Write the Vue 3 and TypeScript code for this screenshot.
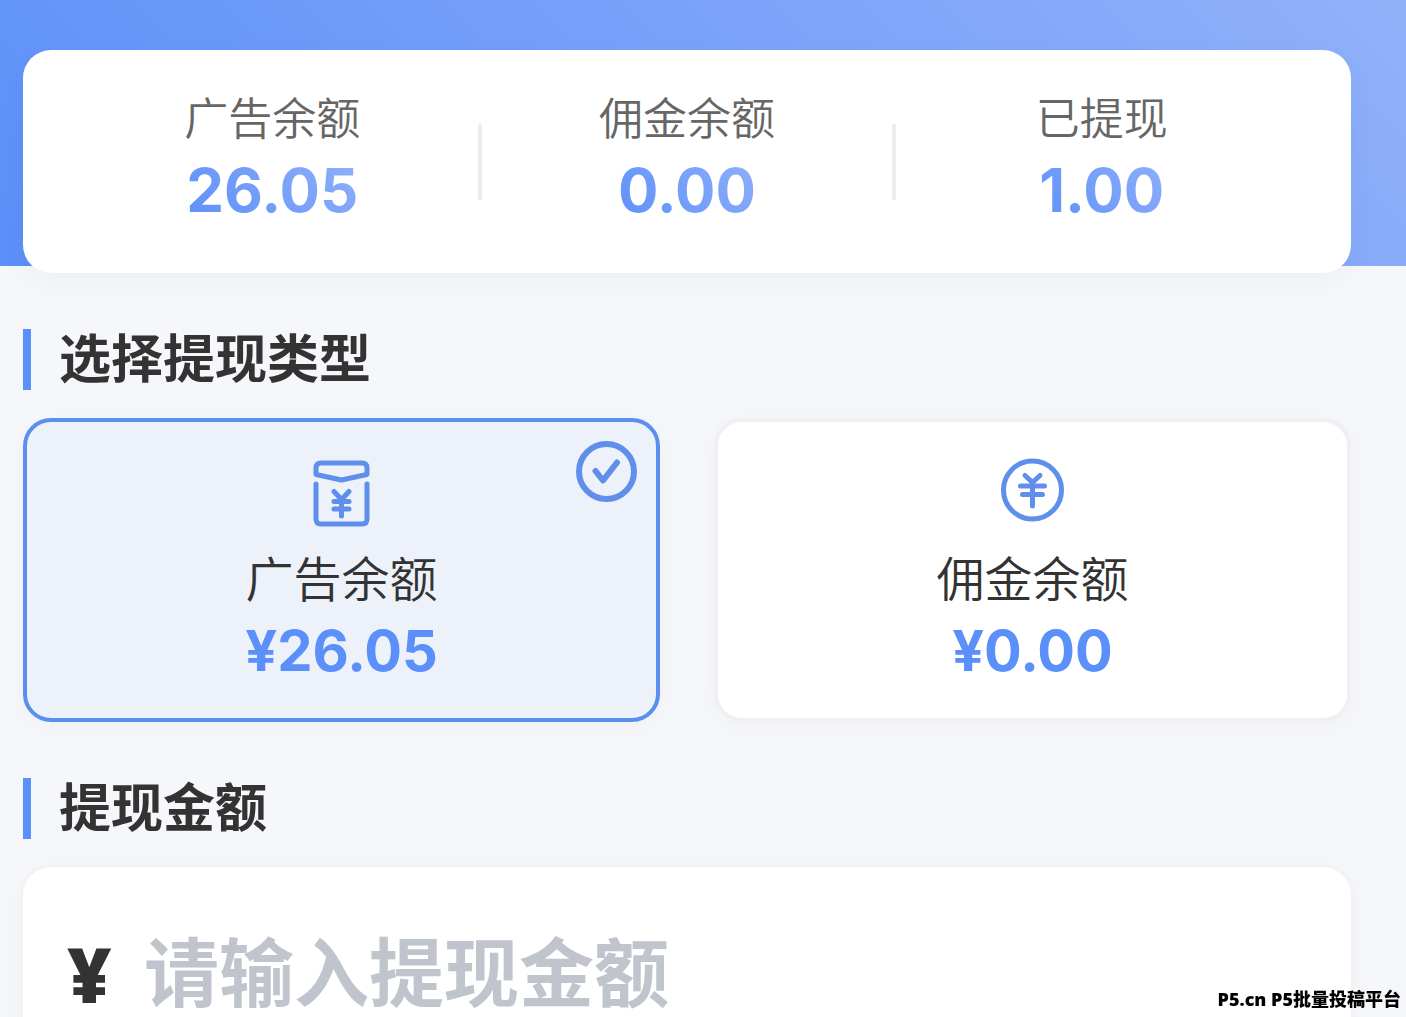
<script setup lang="ts">
import { ref } from 'vue'

interface Stat {
  label: string
  value: string
}

interface WithdrawType {
  id: string
  label: string
  amount: string
}

const stats: Stat[] = [
  { label: '广告余额', value: '26.05' },
  { label: '佣金余额', value: '0.00' },
  { label: '已提现', value: '1.00' },
]

const types: WithdrawType[] = [
  { id: 'ad', label: '广告余额', amount: '26.05' },
  { id: 'commission', label: '佣金余额', amount: '0.00' },
]

const selected = ref('ad')
const amount = ref('')
</script>

<template>
  <div class="page">
    <header class="hero">
      <section class="summary">
        <template v-for="(stat, index) in stats" :key="stat.label">
          <span v-if="index > 0" class="divider"></span>
          <div class="stat">
            <span class="stat-label">{{ stat.label }}</span>
            <strong class="stat-value">{{ stat.value }}</strong>
          </div>
        </template>
      </section>
    </header>

    <main class="content">
      <h2 class="heading">选择提现类型</h2>
      <div class="types" role="radiogroup" aria-label="选择提现类型">
        <label
          v-for="type in types"
          :key="type.id"
          class="type"
          :class="{ active: selected === type.id }"
        >
          <input v-model="selected" class="type-input" type="radio" name="type" :value="type.id" />
          <svg v-if="type.id === 'ad'" class="type-icon" viewBox="0 0 72 72" aria-hidden="true">
            <path d="M10 17.500V11q0-5 5-5H56q5 0 5 5V17.500L35.500 23Z" />
            <path d="M10 27V62q0 5 5 5H56q5 0 5-5V27" />
            <path d="M28 34.500l7.500 8 7.500-8M28 44.500h15M28 52h15M35.500 43V59" />
          </svg>
          <svg v-else class="type-icon" viewBox="0 0 72 72" aria-hidden="true">
            <circle cx="35.500" cy="33" r="29" />
            <path class="thin" d="M28 18.500l7.500 7 7.500-7M23.500 29h24M25.500 37.500h20M35.500 26V49" />
          </svg>
          <span class="type-label">{{ type.label }}</span>
          <strong class="type-amount">¥{{ type.amount }}</strong>
          <svg v-if="selected === type.id" class="check" viewBox="0 0 62 62" aria-hidden="true">
            <circle cx="30.500" cy="31.500" r="27.500" />
            <path d="M19.500 31l7.500 9.500 14-18" />
          </svg>
        </label>
      </div>

      <h2 class="heading">提现金额</h2>
      <label class="amount">
        <span class="currency">¥</span>
        <input
          v-model="amount"
          class="amount-input"
          type="text"
          inputmode="decimal"
          placeholder="请输入提现金额"
          aria-label="提现金额"
        />
      </label>
    </main>

    <div class="watermark">P5.cn P5批量投稿平台</div>
  </div>
</template>

<style>
body {
  margin: 0;
  background: #f6f7fb;
}
</style>

<style scoped>
.page {
  height: 100vh;
  overflow: hidden;
  background: #f6f7fb;
  color: #333;
  font-family: Inter, "Noto Sans CJK SC", sans-serif;
}

.hero {
  display: flow-root;
  padding: 50px 55px 0 23px;
  background: linear-gradient(45deg, #5b8ff9, #91b1fa);
}

.summary {
  position: relative;
  display: flex;
  align-items: center;
  margin-bottom: -7px;
  padding: 40px 44px;
  border-radius: 28px;
  background: #fff;
  box-shadow: 0 8px 28px rgba(0, 0, 0, 0.04);
}

.stat {
  display: flex;
  flex: 1;
  flex-direction: column;
  align-items: center;
}

.stat-label {
  color: #666;
  font-size: 44px;
  font-weight: 350;
  line-height: 58px;
}

.stat-value {
  background: linear-gradient(45deg, #5b8ff9, #91b1fa);
  background-clip: text;
  color: transparent;
  font-size: 60px;
  font-weight: 700;
  line-height: 85px;
}

.divider {
  width: 4px;
  height: 76px;
  background: #ededef;
}

.content {
  padding: 7px 55px 0 23px;
}

.heading {
  margin: 56px 0 28px;
  padding-left: 28px;
  border-left: 8px solid #5b8ff9;
  font-size: 52px;
  font-weight: 700;
  line-height: 61px;
}

.types {
  display: grid;
  grid-template-columns: 1fr 1fr;
  gap: 54px;
}

.type {
  position: relative;
  display: flex;
  flex-direction: column;
  align-items: center;
  padding: 35px 0 32px;
  border: 4px solid #f0f0f2;
  border-radius: 28px;
  background: #fff;
  box-shadow: 0 4px 24px rgba(0, 0, 0, 0.03);
  cursor: pointer;
}

.type.active {
  border-color: #5b8fef;
  background: #edf1fa;
}

.type-input {
  position: absolute;
  opacity: 0;
}

.type-icon {
  width: 72px;
  height: 72px;
  fill: none;
  stroke: #5f8feb;
  stroke-width: 5;
  stroke-linecap: round;
  stroke-linejoin: round;
}

.type-label {
  margin-top: 15px;
  font-size: 48px;
  font-weight: 350;
  line-height: 72px;
}

.type-amount {
  color: #5b8ff9;
  font-size: 56px;
  font-weight: 700;
  line-height: 70px;
}

.check {
  position: absolute;
  top: 18px;
  right: 18px;
  width: 62px;
  height: 62px;
  fill: none;
  stroke: #5f8feb;
  stroke-width: 6;
  stroke-linecap: round;
  stroke-linejoin: round;
}

.amount {
  display: flex;
  align-items: center;
  padding: 65px 44px;
  border-radius: 28px;
  background: #fff;
  box-shadow: 0 0 0 2px #f2f2f4, 0 4px 24px rgba(0, 0, 0, 0.04);
}

.currency {
  width: 77px;
  font-family: "Open Sans", sans-serif;
  font-size: 76px;
  font-weight: 800;
  line-height: 84px;
}

.amount-input {
  flex: 1;
  min-width: 0;
  height: 84px;
  padding: 0;
  border: 0;
  outline: 0;
  background: transparent;
  color: #333;
  font: inherit;
  font-size: 75px;
  font-weight: 700;
  line-height: 84px;
}

.amount-input::placeholder {
  color: #c0c4cc;
  opacity: 1;
}

.watermark {
  position: fixed;
  right: 5px;
  bottom: 5px;
  color: #000;
  font-family: "Open Sans", "Noto Sans CJK SC", sans-serif;
  font-size: 18px;
  font-weight: 900;
  line-height: 26px;
  text-shadow: 0 0 2px #fff, 0 0 2px #fff;
}
</style>
